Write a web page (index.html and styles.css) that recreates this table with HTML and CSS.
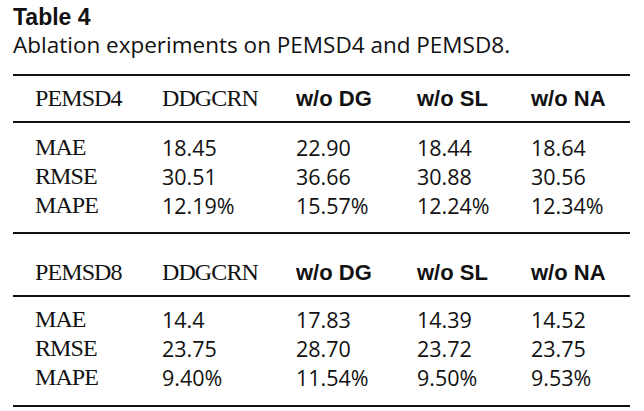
FILE: index.html
```html
<!DOCTYPE html>
<html>
<head>
<meta charset="utf-8">
<link rel="stylesheet" href="styles.css">
</head>
<body>
<div class="page">
  <div class="title">Table 4</div>
  <div class="caption">Ablation experiments on PEMSD4 and PEMSD8.</div>
  <table class="abl">
    <tbody class="sec sec1">
      <tr class="head"><td class="lab">PEMSD4</td><td class="lab">DDGCRN</td><td class="b">w/o DG</td><td class="b">w/o SL</td><td class="b">w/o NA</td></tr>
      <tr class="first"><td class="lab">MAE</td><td>18.45</td><td>22.90</td><td>18.44</td><td>18.64</td></tr>
      <tr><td class="lab">RMSE</td><td>30.51</td><td>36.66</td><td>30.88</td><td>30.56</td></tr>
      <tr class="last"><td class="lab">MAPE</td><td>12.19%</td><td>15.57%</td><td>12.24%</td><td>12.34%</td></tr>
    </tbody>
    <tbody class="sec sec2">
      <tr class="head"><td class="lab">PEMSD8</td><td class="lab">DDGCRN</td><td class="b">w/o DG</td><td class="b">w/o SL</td><td class="b">w/o NA</td></tr>
      <tr class="first"><td class="lab">MAE</td><td>14.4</td><td>17.83</td><td>14.39</td><td>14.52</td></tr>
      <tr><td class="lab">RMSE</td><td>23.75</td><td>28.70</td><td>23.72</td><td>23.75</td></tr>
      <tr class="last"><td class="lab">MAPE</td><td>9.40%</td><td>11.54%</td><td>9.50%</td><td>9.53%</td></tr>
    </tbody>
  </table>
</div>
</body>
</html>
```
FILE: styles.css
```css
html, body {
  margin: 0;
  padding: 0;
  background: #ffffff;
}
.page {
  padding: 4px 0 0 13px;
  width: 617px;
  color: #111111;
}
.title {
  font-family: "Liberation Sans", Arial, sans-serif;
  font-weight: bold;
  font-size: 23px;
  line-height: 26px;
}
.caption {
  font-family: "Open Sans", sans-serif;
  font-size: 22.5px;
  line-height: 29px;
  margin-bottom: 15px;
}
.abl {
  width: 617px;
  border-collapse: collapse;
  border-top: 2px solid #111111;
  border-bottom: 2px solid #111111;
  table-layout: fixed;
}
.abl td {
  padding: 0;
  font-family: "Open Sans", sans-serif;
  font-size: 21.5px;
  line-height: 29px;
  height: 29px;
  white-space: nowrap;
}
.abl td:nth-child(1) { width: 127px; padding-left: 22px; }
.abl td:nth-child(2) { width: 134px; }
.abl td:nth-child(3) { width: 121px; }
.abl td:nth-child(4) { width: 114px; }
.abl td.lab {
  font-family: "Liberation Serif", "Times New Roman", serif;
  font-size: 24px;
  letter-spacing: -0.9px;
}
.abl td.b {
  font-family: "Liberation Sans", Arial, sans-serif;
  font-weight: bold;
  font-size: 22px;
}
.head td {
  border-bottom: 2px solid #111111;
  padding-top: 8px;
  padding-bottom: 8px;
}
.sec2 .head td {
  padding-top: 24px;
  border-top: 2px solid #111111;
}
.first td { padding-top: 10px; }
.last td { padding-bottom: 12px; }
.sec2 .first td { padding-top: 8px; }
.sec2 .last td { padding-bottom: 13px; }
```
